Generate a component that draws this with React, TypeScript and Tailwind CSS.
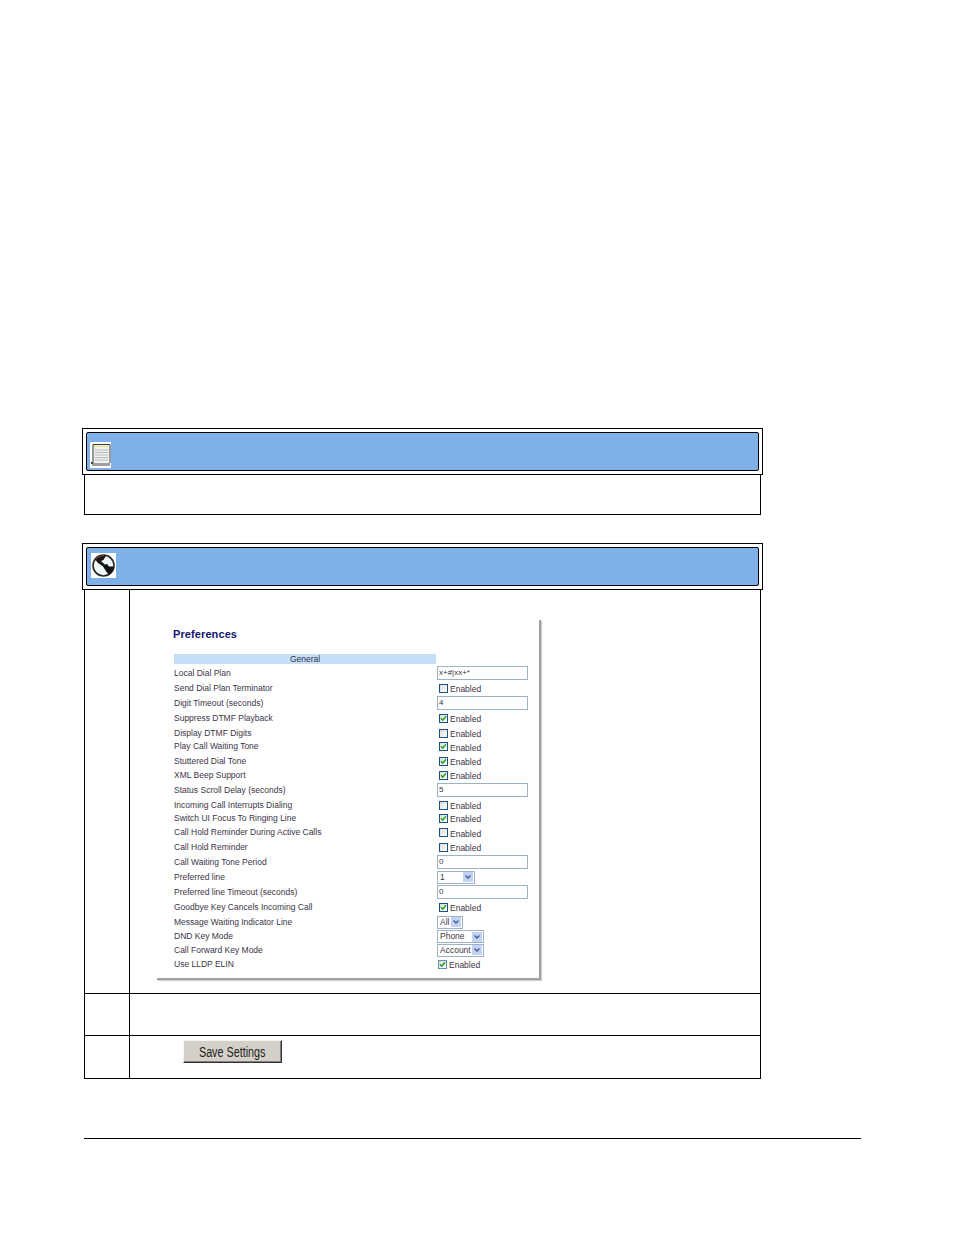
const FONT = "font-['Liberation_Sans',Arial,sans-serif]";

type Ctl =
  | { t: 'input'; v: string }
  | { t: 'check'; on: boolean; faded?: boolean }
  | { t: 'select'; v: string; w: string };

const rows: { label: string; h: string; ctl: Ctl }[] = [
  { label: 'Local Dial Plan', h: 'h-[14px]', ctl: { t: 'input', v: 'x+#|xx+*' } },
  { label: 'Send Dial Plan Terminator', h: 'h-[16px]', ctl: { t: 'check', on: false } },
  { label: 'Digit Timeout (seconds)', h: 'h-[14px]', ctl: { t: 'input', v: '4' } },
  { label: 'Suppress DTMF Playback', h: 'h-[16px]', ctl: { t: 'check', on: true } },
  { label: 'Display DTMF Digits', h: 'h-[14px]', ctl: { t: 'check', on: false } },
  { label: 'Play Call Waiting Tone', h: 'h-[13px]', ctl: { t: 'check', on: true } },
  { label: 'Stuttered Dial Tone', h: 'h-[16px]', ctl: { t: 'check', on: true } },
  { label: 'XML Beep Support', h: 'h-[12px]', ctl: { t: 'check', on: true } },
  { label: 'Status Scroll Delay (seconds)', h: 'h-[18px]', ctl: { t: 'input', v: '5' } },
  { label: 'Incoming Call Interrupts Dialing', h: 'h-[12px]', ctl: { t: 'check', on: false } },
  { label: 'Switch UI Focus To Ringing Line', h: 'h-[14px]', ctl: { t: 'check', on: true } },
  { label: 'Call Hold Reminder During Active Calls', h: 'h-[15px]', ctl: { t: 'check', on: false } },
  { label: 'Call Hold Reminder', h: 'h-[14px]', ctl: { t: 'check', on: false } },
  { label: 'Call Waiting Tone Period', h: 'h-[16px]', ctl: { t: 'input', v: '0' } },
  { label: 'Preferred line', h: 'h-[14px]', ctl: { t: 'select', v: '1', w: 'w-[38px]' } },
  { label: 'Preferred line Timeout (seconds)', h: 'h-[16px]', ctl: { t: 'input', v: '0' } },
  { label: 'Goodbye Key Cancels Incoming Call', h: 'h-[14px]', ctl: { t: 'check', on: true } },
  { label: 'Message Waiting Indicator Line', h: 'h-[16px]', ctl: { t: 'select', v: 'All', w: 'w-[26px]' } },
  { label: 'DND Key Mode', h: 'h-[13px]', ctl: { t: 'select', v: 'Phone', w: 'w-[47px]' } },
  { label: 'Call Forward Key Mode', h: 'h-[14px]', ctl: { t: 'select', v: 'Account', w: 'w-[47px]' } },
  { label: 'Use LLDP ELIN', h: 'h-[14px]', ctl: { t: 'check', on: true, faded: true } },
];

function NoteIcon() {
  return (
    <svg width="21" height="26" viewBox="0 0 21 26" className="shrink-0 block">
      <rect width="21" height="26" fill="#fff" />
      <rect x="2.5" y="2.5" width="17.5" height="20" fill="#f0f0f0" />
      <path d="M3 21V2.5H20V21" fill="none" stroke="#3a3a36" strokeWidth="1" />
      <path d="M4 4.5H19" stroke="#e6e040" strokeDasharray="2 1" strokeWidth="1.2" />
      <path d="M5 8H18M5 10.5H18M5 13H18M5 15.5H18M5 18H18" stroke="#b8b8b8" strokeWidth="1" />
      <rect x="2" y="21" width="18" height="3" fill="#a0a0a0" />
      <rect x="1" y="20" width="2" height="2" fill="#444" />
    </svg>
  );
}

function GlobeIcon() {
  return (
    <svg width="25" height="25" viewBox="0 0 25 25" className="shrink-0 block">
      <rect width="25" height="25" fill="#fff" />
      <circle cx="12.5" cy="12.5" r="10.5" fill="#eef8f8" stroke="#2a2626" strokeWidth="1.6" />
      <path d="M4.5 7C7 3.5 11 2 15 2.8L12.5 7L10 8L16 13.5L11.5 13L7 10Z" fill="#1c1414" />
      <path d="M11.5 12.5L16 11L18 13.5L22.5 13.5C22.5 17 20.5 20 17.5 21.5L14.5 17.5Z" fill="#111" />
      <path d="M5 6C7 3.5 10 2.3 13 2.4" fill="none" stroke="#8a4a3a" strokeWidth="1" />
    </svg>
  );
}

function Check({ on, faded }: { on: boolean; faded?: boolean }) {
  return (
    <span
      className={`block w-[9px] h-[9px] shrink-0 border bg-gradient-to-br from-[#dcdcd7] to-white ${
        faded ? 'border-[#5f8fae]' : 'border-[#1c5180]'
      }`}
    >
      {on && (
        <svg width="7" height="7" viewBox="0 0 7 7" className="block">
          <path d="M1 3.2L2.8 5.2L6 1.2" fill="none" stroke="#21a121" strokeWidth="1.5" />
        </svg>
      )}
    </span>
  );
}

function Control({ c }: { c: Ctl }) {
  if (c.t === 'input') {
    return (
      <div className="w-[91px] h-[14px] border border-[#9db2c9] bg-white pl-[1px] flex items-center text-[8px] leading-none text-[#3a3548]">
        {c.v}
      </div>
    );
  }
  if (c.t === 'check') {
    return (
      <div className={`flex items-center ${c.faded ? 'ml-[1px]' : 'ml-[2px]'} gap-[2px]`}>
        <Check on={c.on} faded={c.faded} />
        <span className="text-[8.5px] leading-none text-[#3a3548] mt-[3px]">Enabled</span>
      </div>
    );
  }
  return (
    <div className={`${c.w} h-[13px] border border-[#9db2c9] bg-white flex items-center justify-between pl-[2px] pr-[1px] text-[8.5px] leading-none text-[#3a3548]`}>
      <span>{c.v}</span>
      <span className="w-[10px] h-[10px] bg-[#c3d1f2] flex items-center justify-center shrink-0">
        <svg width="6" height="4" viewBox="0 0 6 4" className="block">
          <path d="M0.5 0.5L3 3L5.5 0.5" fill="none" stroke="#3d5a93" strokeWidth="1.3" />
        </svg>
      </span>
    </div>
  );
}

function Header({ icon }: { icon: React.ReactNode }) {
  return (
    <div className="w-[681px] h-[47px] border border-black p-[3px] ml-[82px]">
      <div className="w-full h-full bg-[#7fb0e8] border border-black rounded-[2px] flex items-center pl-[3px]">
        {icon}
      </div>
    </div>
  );
}

export default function App() {
  return (
    <div className={`${FONT} w-[954px] h-[1235px] bg-white pt-[428px] overflow-hidden`}>
      <Header icon={<div className="mt-[6px]"><NoteIcon /></div>} />
      <div className="ml-[84px] w-[677px] h-[40px] border-x border-b border-black" />

      <div className="h-[28px]" />

      <Header icon={<div className="ml-[1px] -mt-[2px]"><GlobeIcon /></div>} />
      <div className="ml-[84px] w-[677px] border-x border-b border-black">
        <div className="flex h-[404px] border-b border-black">
          <div className="w-[45px] border-r border-black shrink-0" />
          <div className="pl-[27px] pt-[30px]">
            <div className="w-[384px] h-[360px] border-r-2 border-b-2 border-[#a0a0a0] shadow-[1px_1px_1px_#d0d0d0] pl-[16px] pt-[9px]">
              <div className="text-[11px] leading-none font-bold text-[#14146e] h-[25px] tracking-[0.1px]">Preferences</div>
              <div className="w-[262px] ml-[1px] h-[10px] bg-[#c5dff8] text-center text-[8.5px] leading-[10px] text-[#2f2f52]">General</div>
              <div className="mt-[2px]">
                {rows.map((r) => (
                  <div key={r.label} className={`flex items-center ${r.h}`}>
                    <div className="w-[264px] pl-[1px] text-[8.5px] leading-none text-[#3a3548] whitespace-nowrap">{r.label}</div>
                    <Control c={r.ctl} />
                  </div>
                ))}
              </div>
            </div>
          </div>
        </div>
        <div className="flex h-[42px] border-b border-black">
          <div className="w-[45px] border-r border-black shrink-0" />
        </div>
        <div className="flex h-[42px]">
          <div className="w-[45px] border-r border-black shrink-0" />
          <div className="pl-[53px] pt-[4px]">
            <div className="w-[99px] h-[23px] bg-[#d4d0c8] border border-t-[#f4f4f0] border-l-[#f4f4f0] border-r-[#333] border-b-[#333] shadow-[inset_-1px_-1px_0_#808080] flex items-center justify-center">
              <span className="block text-[14px] leading-none text-[#222] scale-x-[0.77] whitespace-nowrap">Save Settings</span>
            </div>
          </div>
        </div>
      </div>

      <div className="ml-[84px] w-[777px] h-px bg-black mt-[59px]" />
    </div>
  );
}
